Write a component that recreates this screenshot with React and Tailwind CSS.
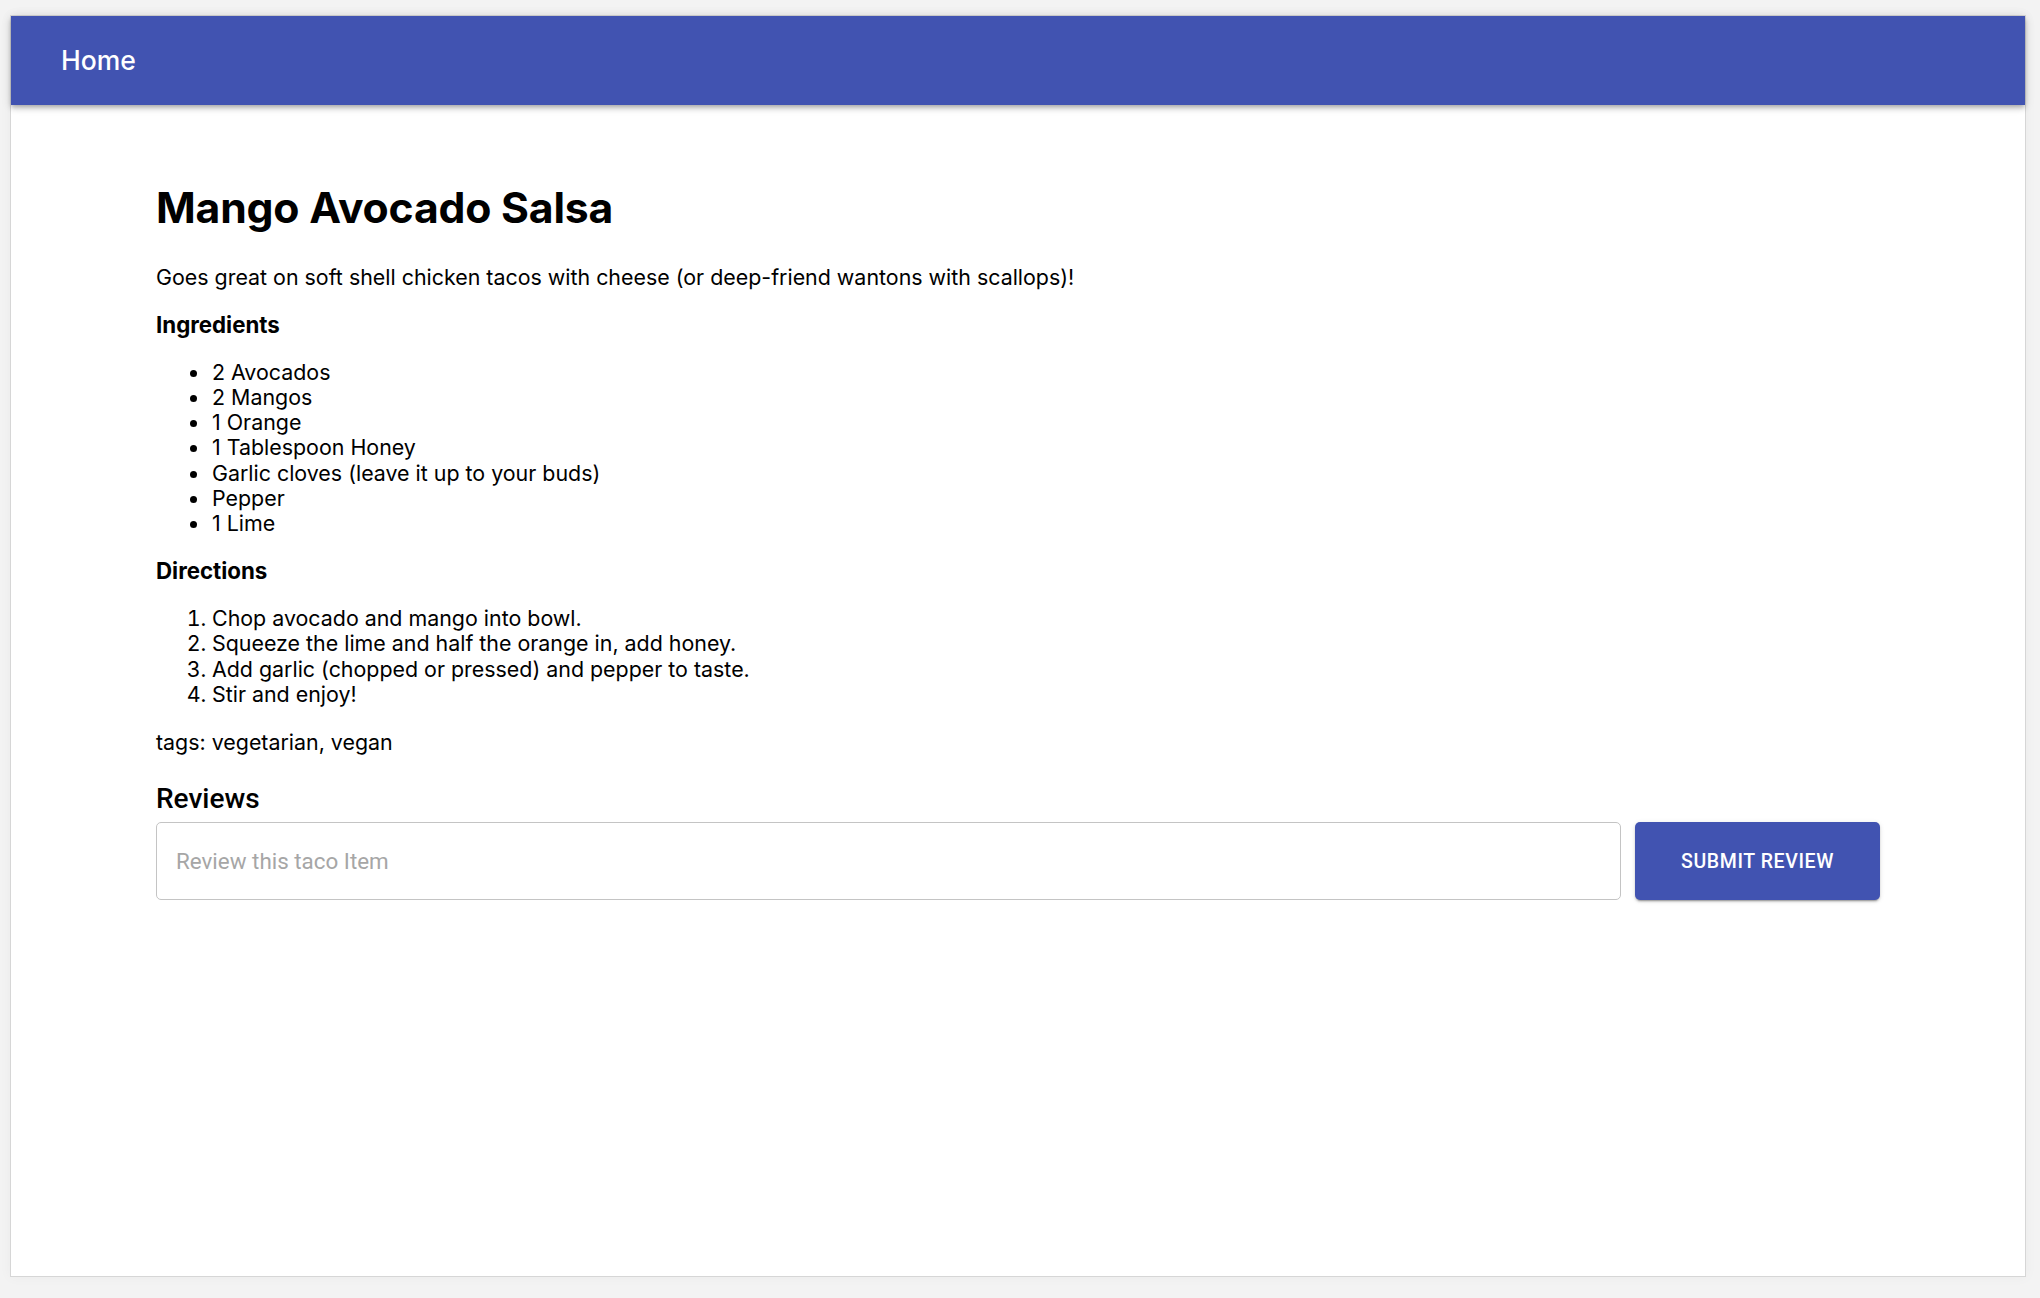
export default function App() {
  const ingredients = [
    "2 Avocados",
    "2 Mangos",
    "1 Orange",
    "1 Tablespoon Honey",
    "Garlic cloves (leave it up to your buds)",
    "Pepper",
    "1 Lime",
  ];
  const directions = [
    "Chop avocado and mango into bowl.",
    "Squeeze the lime and half the orange in, add honey.",
    "Add garlic (chopped or pressed) and pepper to taste.",
    "Stir and enjoy!",
  ];
  return (
    <div className="min-h-screen w-full bg-[#f3f3f3] pt-[15px] pl-[10px] pr-[14px] pb-[21px]">
      <div className="h-[1262px] w-[2016px] border border-[#d6d6d6] bg-white flex flex-col shadow-[0_0_12px_rgba(0,0,0,0.04)]">
        <header className="h-[89px] shrink-0 bg-[#4153b1] flex items-center pl-[50px] shadow-[0_2px_4px_-1px_rgba(0,0,0,0.2),0_4px_5px_0_rgba(0,0,0,0.14),0_1px_10px_0_rgba(0,0,0,0.12)] relative z-10">
          <span className="text-white text-[26.5px] font-medium font-['Inter',sans-serif] leading-none">Home</span>
        </header>
        <main className="px-[145px] pt-[78px] text-black font-['Inter','Liberation_Sans',sans-serif] text-[21.4px] leading-[25.3px]">
          <h1 className="text-[42.7px] leading-[50px] font-bold tracking-[-0.2px]">Mango Avocado Salsa</h1>
          <p className="mt-[32px]">Goes great on soft shell chicken tacos with cheese (or deep-friend wantons with scallops)!</p>
          <h4 className="mt-[22px] text-[22.3px] font-bold">Ingredients</h4>
          <ul className="mt-[22px] pl-[56px]">
            {ingredients.map((i) => (
              <li key={i} className="relative">
                <span className="absolute left-[-22px] top-[10px] w-[7px] h-[7px] rounded-full bg-black" />
                {i}
              </li>
            ))}
          </ul>
          <h4 className="mt-[21px] text-[22.3px] font-bold">Directions</h4>
          <ol className="mt-[23px] list-decimal pl-[56px]">
            {directions.map((d) => (
              <li key={d}>{d}</li>
            ))}
          </ol>
          <p className="mt-[23px]">tags: vegetarian, vegan</p>
          <h3 className="mt-[28px] text-[28px] leading-[31px] font-medium font-['Roboto',sans-serif]">Reviews</h3>
          <div className="mt-[8px] flex gap-[14px]">
            <input
              type="text"
              placeholder="Review this taco Item"
              className="flex-1 h-[78px] border border-[#c4c4c4] rounded-[5px] px-[19px] text-[22.4px] font-['Roboto',sans-serif] placeholder:text-[#a6a6a6] outline-none"
            />
            <button className="w-[245px] h-[78px] bg-[#4153b1] text-white rounded-[5px] font-['Roboto',sans-serif] font-medium text-[19.5px] tracking-[0.6px] shadow-[0_3px_1px_-2px_rgba(0,0,0,0.2),0_2px_2px_0_rgba(0,0,0,0.14),0_1px_5px_0_rgba(0,0,0,0.12)]">
              SUBMIT REVIEW
            </button>
          </div>
        </main>
      </div>
    </div>
  );
}
